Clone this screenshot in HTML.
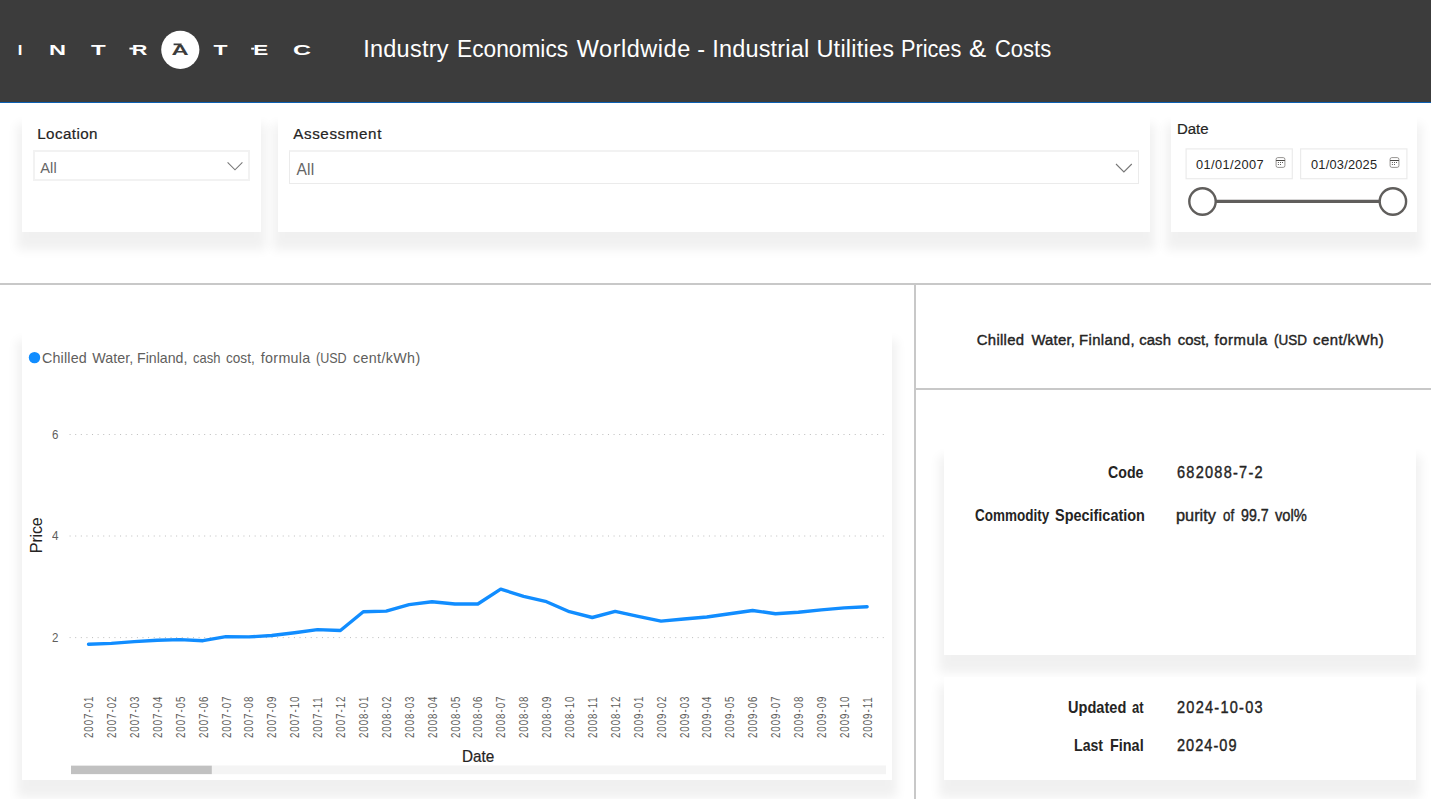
<!DOCTYPE html>
<html lang="en">
<head>
<meta charset="utf-8">
<title>Industry Economics Worldwide - Industrial Utilities Prices &amp; Costs</title>
<style>
html,body{margin:0;padding:0;}
body{width:1431px;height:799px;overflow:hidden;background:#fff;position:relative;
  font-family:"Liberation Sans",sans-serif;color:#252423;}
.abs{position:absolute;white-space:nowrap;line-height:1;}
.t{position:absolute;white-space:nowrap;line-height:1;transform-origin:0 0;}
#hdr{position:absolute;left:0;top:0;width:1431px;height:102px;background:#3c3c3c;border-bottom:1px solid #0c60b2;}
.card{position:absolute;background:#fff;box-shadow:0 13px 10px 5px rgba(0,0,0,0.06);}
.dd{position:absolute;border:2px solid #f2f2f2;box-sizing:border-box;background:#fff;}
.hline{position:absolute;background:#c8c8c8;}
</style>
</head>
<body>

<!-- header -->
<div id="hdr"></div>
<svg class="abs" style="left:0;top:0" width="340" height="100" viewBox="0 0 340 100">
  <circle cx="180.3" cy="49.8" r="19.1" fill="#fff"/>
  <g font-family="Liberation Sans, sans-serif" font-weight="bold" font-size="15" fill="#fff">
    <text x="17.8" y="54.8" textLength="4.6" lengthAdjust="spacingAndGlyphs">I</text>
    <text x="49" y="54.8" textLength="17" lengthAdjust="spacingAndGlyphs">N</text>
    <text x="91" y="54.8" textLength="14.7" lengthAdjust="spacingAndGlyphs">T</text>
    <text x="131.8" y="54.8" textLength="15.6" lengthAdjust="spacingAndGlyphs">R</text>
    <text x="171.6" y="54.8" textLength="17.2" lengthAdjust="spacingAndGlyphs" fill="#3c3c3c">A</text>
    <text x="213.5" y="54.8" textLength="14" lengthAdjust="spacingAndGlyphs">T</text>
    <text x="253.2" y="54.8" textLength="15" lengthAdjust="spacingAndGlyphs">E</text>
    <text x="293" y="54.8" textLength="18" lengthAdjust="spacingAndGlyphs">C</text>
  </g>
  <rect x="129.4" y="47.6" width="4" height="1.9" fill="#fff"/>
  <rect x="251.2" y="47.7" width="3" height="1.9" fill="#fff"/>
  <rect x="173.6" y="43.5" width="8" height="1.7" fill="#3c3c3c"/>
</svg>

<!-- filters -->
<div class="card" style="left:22px;top:116px;width:239px;height:116px"></div>
<div class="dd" style="left:33px;top:150px;width:217px;height:31px"></div>
<svg class="abs" style="left:226px;top:160px" width="18" height="12"><path d="M1.6 2.4 L9 9.8 L16.4 2.4" fill="none" stroke="#777" stroke-width="1.1"/></svg>

<div class="card" style="left:278px;top:116px;width:872px;height:116px"></div>
<div class="dd" style="left:289px;top:150px;width:850px;height:34px;border-width:2px 1px 1px 1px;border-color:#f2f2f2 #ebebeb #ebebeb #ebebeb"></div>
<svg class="abs" style="left:1115px;top:162px" width="18" height="12"><path d="M1 2 L8.9 9.9 L16.8 2" fill="none" stroke="#777" stroke-width="1.1"/></svg>

<div class="card" style="left:1171px;top:116px;width:246px;height:116px"></div>
<svg class="abs" style="left:1180px;top:144px" width="236" height="40"><rect x="6.1" y="4.9" width="106.2" height="29.8" fill="#fff" stroke="#ebebeb" stroke-width="1.2"/><rect x="120.6" y="4.9" width="106.3" height="29.8" fill="#fff" stroke="#ebebeb" stroke-width="1.2"/></svg>
<svg class="abs" style="left:1274px;top:156px" width="14" height="14"><rect x="2.1" y="1.6" width="8.8" height="9.8" rx="1.7" fill="none" stroke="#8a8886" stroke-width="0.9"/><path d="M2.1 4.5H10.9" stroke="#484644" stroke-width="1"/><path d="M3.9 6.5h1M6 6.5h1M8 6.5h1M3.9 8.5h1M6 8.5h1" stroke="#605e5c" stroke-width="1"/></svg>
<svg class="abs" style="left:1388.4px;top:156px" width="14" height="14"><rect x="2.1" y="1.6" width="8.8" height="9.8" rx="1.7" fill="none" stroke="#8a8886" stroke-width="0.9"/><path d="M2.1 4.5H10.9" stroke="#484644" stroke-width="1"/><path d="M3.9 6.5h1M6 6.5h1M8 6.5h1M3.9 8.5h1M6 8.5h1" stroke="#605e5c" stroke-width="1"/></svg>
<svg class="abs" style="left:1180px;top:184px" width="236" height="36">
  <path d="M22.5 17.4H212.9" stroke="#605e5c" stroke-width="3.2"/>
  <circle cx="22.5" cy="17.5" r="13.2" fill="#fff" stroke="#605e5c" stroke-width="2.4"/>
  <circle cx="212.9" cy="17.5" r="13.2" fill="#fff" stroke="#605e5c" stroke-width="2.4"/>
</svg>

<!-- dividers -->
<div class="hline" style="left:0;top:283px;width:1431px;height:2px"></div>
<div class="hline" style="left:914px;top:284px;width:2px;height:515px"></div>
<div class="hline" style="left:915px;top:388px;width:516px;height:2px"></div>

<!-- chart card -->
<div class="card" style="left:22px;top:332px;width:870px;height:448px"></div>
<svg class="abs" style="left:0;top:330px" width="900" height="460" viewBox="0 330 900 460" font-family="Liberation Sans, sans-serif">
  <circle cx="34.5" cy="357.6" r="5.7" fill="#118dff"/>
  <g stroke="#bdbdbd" stroke-width="1" stroke-dasharray="1 4.608" fill="none">
    <path d="M69.6 434.5H884.5"/><path d="M69.6 536H884.5"/><path d="M69.6 637.6H884.5"/>
  </g>
  <text transform="translate(42.2,553.2) rotate(-90)" font-size="16.2" fill="#252423" textLength="36" lengthAdjust="spacing">Price</text>
  <polyline fill="none" stroke="#118dff" stroke-width="3.4" stroke-linejoin="round" stroke-linecap="round"
    points="88.5,644.3 111.4,643.4 134.3,641.6 157.2,640.2 180.1,639.6 203,640.7 225.9,636.6 248.8,636.9 271.7,635.5 294.6,632.8 317.5,629.6 340.4,630.5 363.3,611.7 386.2,611.1 409.1,604.6 432,601.7 454.9,604 477.8,604 500.7,589.1 523.6,596.4 546.5,601.7 569.4,611.7 592.3,617.5 615.2,611.4 638.1,616.4 661,621.1 683.9,619 706.8,617 729.7,613.7 752.6,610.5 775.5,613.7 798.4,612.3 821.3,609.9 844.2,607.9 867.1,606.7"/>
  <g id="xl" font-size="12.4" fill="#605e5c">
    <text transform="translate(93.1,738.0) rotate(-90) scale(0.78,1)" letter-spacing="1.26">2007-01</text>
    <text transform="translate(116.0,738.0) rotate(-90) scale(0.78,1)" letter-spacing="1.26">2007-02</text>
    <text transform="translate(138.9,738.0) rotate(-90) scale(0.78,1)" letter-spacing="1.26">2007-03</text>
    <text transform="translate(161.8,738.0) rotate(-90) scale(0.78,1)" letter-spacing="1.26">2007-04</text>
    <text transform="translate(184.7,738.0) rotate(-90) scale(0.78,1)" letter-spacing="1.26">2007-05</text>
    <text transform="translate(207.6,738.0) rotate(-90) scale(0.78,1)" letter-spacing="1.26">2007-06</text>
    <text transform="translate(230.5,738.0) rotate(-90) scale(0.78,1)" letter-spacing="1.26">2007-07</text>
    <text transform="translate(253.4,738.0) rotate(-90) scale(0.78,1)" letter-spacing="1.26">2007-08</text>
    <text transform="translate(276.3,738.0) rotate(-90) scale(0.78,1)" letter-spacing="1.26">2007-09</text>
    <text transform="translate(299.2,738.0) rotate(-90) scale(0.78,1)" letter-spacing="1.26">2007-10</text>
    <text transform="translate(322.1,738.0) rotate(-90) scale(0.78,1)" letter-spacing="1.26">2007-11</text>
    <text transform="translate(345.0,738.0) rotate(-90) scale(0.78,1)" letter-spacing="1.26">2007-12</text>
    <text transform="translate(367.9,738.0) rotate(-90) scale(0.78,1)" letter-spacing="1.26">2008-01</text>
    <text transform="translate(390.8,738.0) rotate(-90) scale(0.78,1)" letter-spacing="1.26">2008-02</text>
    <text transform="translate(413.7,738.0) rotate(-90) scale(0.78,1)" letter-spacing="1.26">2008-03</text>
    <text transform="translate(436.6,738.0) rotate(-90) scale(0.78,1)" letter-spacing="1.26">2008-04</text>
    <text transform="translate(459.5,738.0) rotate(-90) scale(0.78,1)" letter-spacing="1.26">2008-05</text>
    <text transform="translate(482.4,738.0) rotate(-90) scale(0.78,1)" letter-spacing="1.26">2008-06</text>
    <text transform="translate(505.3,738.0) rotate(-90) scale(0.78,1)" letter-spacing="1.26">2008-07</text>
    <text transform="translate(528.2,738.0) rotate(-90) scale(0.78,1)" letter-spacing="1.26">2008-08</text>
    <text transform="translate(551.1,738.0) rotate(-90) scale(0.78,1)" letter-spacing="1.26">2008-09</text>
    <text transform="translate(574.0,738.0) rotate(-90) scale(0.78,1)" letter-spacing="1.26">2008-10</text>
    <text transform="translate(596.9,738.0) rotate(-90) scale(0.78,1)" letter-spacing="1.26">2008-11</text>
    <text transform="translate(619.8,738.0) rotate(-90) scale(0.78,1)" letter-spacing="1.26">2008-12</text>
    <text transform="translate(642.7,738.0) rotate(-90) scale(0.78,1)" letter-spacing="1.26">2009-01</text>
    <text transform="translate(665.6,738.0) rotate(-90) scale(0.78,1)" letter-spacing="1.26">2009-02</text>
    <text transform="translate(688.5,738.0) rotate(-90) scale(0.78,1)" letter-spacing="1.26">2009-03</text>
    <text transform="translate(711.4,738.0) rotate(-90) scale(0.78,1)" letter-spacing="1.26">2009-04</text>
    <text transform="translate(734.3,738.0) rotate(-90) scale(0.78,1)" letter-spacing="1.26">2009-05</text>
    <text transform="translate(757.2,738.0) rotate(-90) scale(0.78,1)" letter-spacing="1.26">2009-06</text>
    <text transform="translate(780.1,738.0) rotate(-90) scale(0.78,1)" letter-spacing="1.26">2009-07</text>
    <text transform="translate(803.0,738.0) rotate(-90) scale(0.78,1)" letter-spacing="1.26">2009-08</text>
    <text transform="translate(825.9,738.0) rotate(-90) scale(0.78,1)" letter-spacing="1.26">2009-09</text>
    <text transform="translate(848.8,738.0) rotate(-90) scale(0.78,1)" letter-spacing="1.26">2009-10</text>
    <text transform="translate(871.7,738.0) rotate(-90) scale(0.78,1)" letter-spacing="1.26">2009-11</text>
  </g>
  <rect x="71" y="765.5" width="815" height="8.7" fill="#f4f4f4"/>
  <rect x="71" y="765.7" width="140.8" height="8.4" fill="#c1c1c1"/>
</svg>

<!-- right panel cards -->
<div class="card" style="left:944px;top:448px;width:472px;height:207px"></div>
<div class="card" style="left:944px;top:677px;width:472px;height:103px"></div>

<!-- text -->
<div class="t" id="t1" style="left:363.20px;top:38.41px;font-size:23.5px;color:#ffffff;letter-spacing:0.243px;">Industry</div>
<div class="t" id="t2" style="left:457.23px;top:38.41px;font-size:23.5px;color:#ffffff;transform:scaleX(0.9667);">Economics</div>
<div class="t" id="t3" style="left:576.80px;top:38.41px;font-size:23.5px;color:#ffffff;letter-spacing:0.525px;">Worldwide</div>
<div class="t" id="t4" style="left:697.20px;top:38.41px;font-size:23.5px;color:#ffffff;">-</div>
<div class="t" id="t5" style="left:712.20px;top:38.41px;font-size:23.5px;color:#ffffff;letter-spacing:0.178px;">Industrial</div>
<div class="t" id="t6" style="left:816.40px;top:38.41px;font-size:23.5px;color:#ffffff;letter-spacing:0.250px;">Utilities</div>
<div class="t" id="t7" style="left:901.11px;top:38.41px;font-size:23.5px;color:#ffffff;transform:scaleX(0.9234);">Prices</div>
<div class="t" id="t8" style="left:969.37px;top:38.41px;font-size:23.5px;color:#ffffff;transform:scaleX(1.1000);">&amp;</div>
<div class="t" id="t9" style="left:994.61px;top:38.41px;font-size:23.5px;color:#ffffff;transform:scaleX(0.9350);">Costs</div>
<div class="t" id="lloc" style="left:37.20px;top:125.93px;font-size:15.2px;color:#252423;-webkit-text-stroke:0.22px;letter-spacing:0.414px;">Location</div>
<div class="t" id="aloc" style="left:40.20px;top:160.64px;font-size:14.6px;color:#666666;letter-spacing:0.150px;">All</div>
<div class="t" id="lass" style="left:293.20px;top:125.93px;font-size:15.2px;color:#252423;-webkit-text-stroke:0.22px;letter-spacing:0.611px;">Assessment</div>
<div class="t" id="aass" style="left:296.40px;top:161.79px;font-size:15.6px;color:#666666;letter-spacing:0.250px;">All</div>
<div class="t" id="ldat" style="left:1177.01px;top:120.93px;font-size:15.2px;color:#252423;-webkit-text-stroke:0.22px;transform:scaleX(0.9844);">Date</div>
<div class="t" id="d1" style="left:1196.00px;top:159.26px;font-size:12.8px;color:#252423;letter-spacing:0.400px;">01/01/2007</div>
<div class="t" id="d2" style="left:1311.00px;top:159.26px;font-size:12.8px;color:#252423;letter-spacing:0.222px;">01/03/2025</div>
<div class="t" id="g1" style="left:42.00px;top:350.60px;font-size:14.3px;color:#605e5c;letter-spacing:0.167px;">Chilled</div>
<div class="t" id="g2" style="left:92.20px;top:350.60px;font-size:14.3px;color:#605e5c;letter-spacing:0.060px;">Water,</div>
<div class="t" id="g3" style="left:137.00px;top:350.60px;font-size:14.3px;color:#605e5c;transform:scaleX(0.9900);">Finland,</div>
<div class="t" id="g4" style="left:192.76px;top:350.60px;font-size:14.3px;color:#605e5c;transform:scaleX(0.9065);">cash</div>
<div class="t" id="g5" style="left:226.19px;top:350.60px;font-size:14.3px;color:#605e5c;transform:scaleX(0.9500);">cost,</div>
<div class="t" id="g6" style="left:260.80px;top:350.60px;font-size:14.3px;color:#605e5c;letter-spacing:0.300px;">formula</div>
<div class="t" id="g7" style="left:316.19px;top:350.60px;font-size:14.3px;color:#605e5c;transform:scaleX(0.8771);">(USD</div>
<div class="t" id="g8" style="left:353.00px;top:350.60px;font-size:14.3px;color:#605e5c;letter-spacing:0.350px;">cent/kWh)</div>
<div class="t" id="y6" style="left:52.00px;top:429.33px;font-size:12.6px;color:#605e5c;transform:scaleX(0.9143);">6</div>
<div class="t" id="y4" style="left:52.00px;top:529.83px;font-size:12.6px;color:#605e5c;transform:scaleX(0.9286);">4</div>
<div class="t" id="y2" style="left:51.62px;top:632.33px;font-size:12.6px;color:#605e5c;transform:scaleX(0.9143);">2</div>
<div class="t" id="xdate" style="left:461.61px;top:748.29px;font-size:16.2px;color:#252423;-webkit-text-stroke:0.22px;transform:scaleX(0.9441);">Date</div>
<div class="t" id="r1" style="left:976.80px;top:332.99px;font-size:14.9px;color:#252423;-webkit-text-stroke:0.4px;letter-spacing:0.283px;">Chilled</div>
<div class="t" id="r2" style="left:1031.40px;top:332.99px;font-size:14.9px;color:#252423;-webkit-text-stroke:0.4px;letter-spacing:0.220px;">Water,</div>
<div class="t" id="r3" style="left:1079.00px;top:332.99px;font-size:14.9px;color:#252423;-webkit-text-stroke:0.4px;letter-spacing:0.386px;">Finland,</div>
<div class="t" id="r4" style="left:1139.20px;top:332.99px;font-size:14.9px;color:#252423;-webkit-text-stroke:0.4px;letter-spacing:0.100px;">cash</div>
<div class="t" id="r5" style="left:1177.80px;top:332.99px;font-size:14.9px;color:#252423;-webkit-text-stroke:0.4px;">cost,</div>
<div class="t" id="r6" style="left:1214.60px;top:332.99px;font-size:14.9px;color:#252423;-webkit-text-stroke:0.4px;letter-spacing:0.517px;">formula</div>
<div class="t" id="r7" style="left:1274.05px;top:332.99px;font-size:14.9px;color:#252423;-webkit-text-stroke:0.4px;transform:scaleX(0.9056);">(USD</div>
<div class="t" id="r8" style="left:1313.00px;top:332.99px;font-size:14.9px;color:#252423;-webkit-text-stroke:0.4px;letter-spacing:0.463px;">cent/kWh)</div>
<div class="t" id="k1" style="left:1107.88px;top:464.13px;font-size:16.5px;color:#252423;font-weight:bold;transform:scaleX(0.8585);">Code</div>
<div class="t" id="v1" style="left:1176.56px;top:464.13px;font-size:16.5px;color:#252423;-webkit-text-stroke:0.4px;letter-spacing:1.427px;transform:scaleX(0.8800);">682088-7-2</div>
<div class="t" id="k2a" style="left:975.27px;top:506.93px;font-size:16.5px;color:#252423;font-weight:bold;transform:scaleX(0.8176);">Commodity</div>
<div class="t" id="k2b" style="left:1055.25px;top:506.93px;font-size:16.5px;color:#252423;font-weight:bold;transform:scaleX(0.8755);">Specification</div>
<div class="t" id="v2a" style="left:1176.01px;top:506.93px;font-size:16.5px;color:#252423;-webkit-text-stroke:0.4px;transform:scaleX(0.9900);">purity</div>
<div class="t" id="v2b" style="left:1222.72px;top:506.93px;font-size:16.5px;color:#252423;-webkit-text-stroke:0.4px;transform:scaleX(0.8067);">of</div>
<div class="t" id="v2c" style="left:1240.74px;top:506.93px;font-size:16.5px;color:#252423;-webkit-text-stroke:0.4px;letter-spacing:0.031px;transform:scaleX(0.8600);">99.7</div>
<div class="t" id="v2d" style="left:1274.51px;top:506.93px;font-size:16.5px;color:#252423;-webkit-text-stroke:0.4px;transform:scaleX(0.8919);">vol%</div>
<div class="t" id="k3a" style="left:1068.25px;top:699.13px;font-size:16.5px;color:#252423;font-weight:bold;transform:scaleX(0.8831);">Updated</div>
<div class="t" id="k3b" style="left:1131.89px;top:699.13px;font-size:16.5px;color:#252423;font-weight:bold;transform:scaleX(0.7875);">at</div>
<div class="t" id="v3" style="left:1176.56px;top:699.13px;font-size:16.5px;color:#252423;-webkit-text-stroke:0.4px;letter-spacing:1.427px;transform:scaleX(0.8800);">2024-10-03</div>
<div class="t" id="k4a" style="left:1074.44px;top:737.13px;font-size:16.5px;color:#252423;font-weight:bold;transform:scaleX(0.8559);">Last</div>
<div class="t" id="k4b" style="left:1109.88px;top:737.13px;font-size:16.5px;color:#252423;font-weight:bold;transform:scaleX(0.8737);">Final</div>
<div class="t" id="v4" style="left:1176.56px;top:737.33px;font-size:16.5px;color:#252423;-webkit-text-stroke:0.4px;letter-spacing:1.178px;transform:scaleX(0.8800);">2024-09</div>

</body>
</html>
